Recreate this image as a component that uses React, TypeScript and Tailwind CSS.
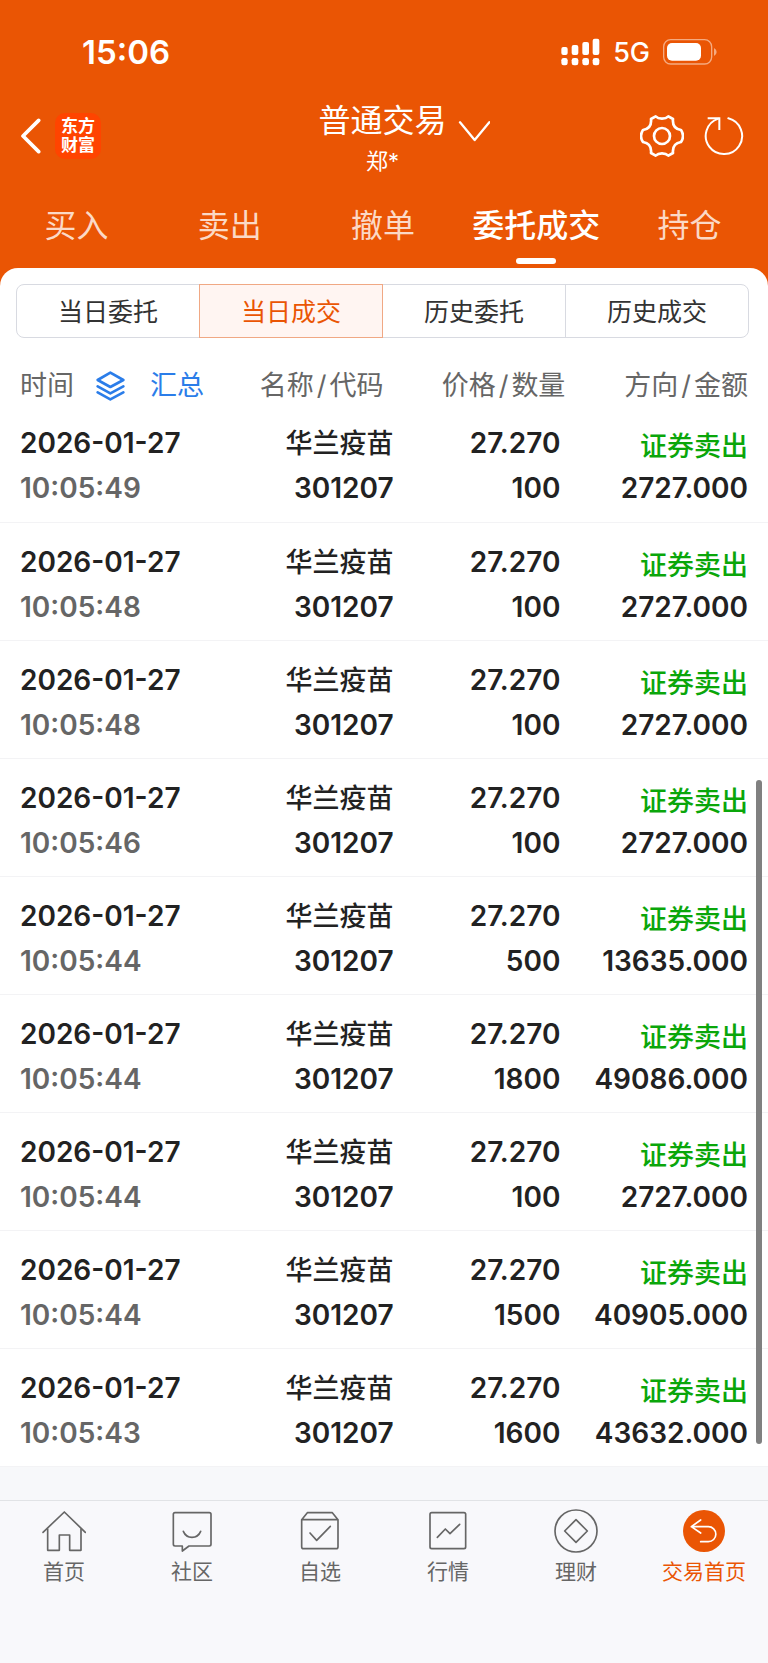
import { useState } from "react";
import type { ReactNode } from "react";

const TABS = ["买入", "卖出", "撤单", "委托成交", "持仓"];
const SEGMENTS = ["当日委托", "当日成交", "历史委托", "历史成交"];

type Trade = { time: string; quantity: string; amount: string };

const TRADES: Trade[] = [
  { time: "10:05:49", quantity: "100", amount: "2727.000" },
  { time: "10:05:48", quantity: "100", amount: "2727.000" },
  { time: "10:05:48", quantity: "100", amount: "2727.000" },
  { time: "10:05:46", quantity: "100", amount: "2727.000" },
  { time: "10:05:44", quantity: "500", amount: "13635.000" },
  { time: "10:05:44", quantity: "1800", amount: "49086.000" },
  { time: "10:05:44", quantity: "100", amount: "2727.000" },
  { time: "10:05:44", quantity: "1500", amount: "40905.000" },
  { time: "10:05:43", quantity: "1600", amount: "43632.000" },
];

function StatusBar() {
  return (
    <div className="flex h-[88px] items-center justify-between pt-[16px] pr-[51px] pl-[82px] text-white">
      <span className="text-[33px] leading-[40px] font-semibold">15:06</span>
      <div className="flex items-center gap-[13px]">
        <svg className="h-[28px] w-[39px]" viewBox="0 0 117 84" fill="currentColor" aria-hidden="true">
          <rect x="1" y="27" width="19" height="24" rx="6" />
          <rect x="32" y="21" width="20" height="30" rx="6" />
          <rect x="64" y="12" width="20" height="39" rx="6" />
          <rect x="95" y="2" width="20" height="49" rx="6" />
          <rect x="1" y="60" width="19" height="22" rx="7" />
          <rect x="32" y="60" width="20" height="22" rx="7" />
          <rect x="64" y="60" width="20" height="22" rx="7" />
          <rect x="95" y="60" width="20" height="22" rx="7" />
        </svg>
        <span className="pt-[2px] text-[27px] leading-[32px] font-medium">5G</span>
        <svg className="h-[26px] w-[54px]" viewBox="0 0 162 78" aria-hidden="true">
          <rect x="2" y="2" width="144" height="73" rx="21" fill="none" stroke="#f5aa80" strokeWidth="4" />
          <rect x="12" y="12" width="102" height="53" rx="15" fill="#fff" />
          <path d="M153 27 Q161 31 161 39 Q161 47 153 51 Z" fill="#f5aa80" />
        </svg>
      </div>
    </div>
  );
}

function NavBar() {
  return (
    <div className="flex h-[96px] items-start text-white">
      <div className="flex h-full flex-1 items-center gap-[12px] pl-[20px]">
        <button type="button" aria-label="返回">
          <svg className="h-[36px] w-[23px]" viewBox="0 0 69 108" fill="none" stroke="currentColor" strokeWidth="11" strokeLinecap="round" strokeLinejoin="round">
            <path d="M56 7 L9 54 L56 101" />
          </svg>
        </button>
        <div className="flex size-[46px] flex-col items-center justify-center rounded-[10px] bg-[#ff4400] text-[17px] leading-[19px] font-bold">
          <span>东方</span>
          <span>财富</span>
        </div>
      </div>
      <div className="flex flex-col items-center pt-[11px]">
        <h1>
          <button type="button" className="flex items-center">
            <span className="w-[43px]" />
            <span className="text-[32px] leading-[44px]">普通交易</span>
            <span className="flex w-[43px] justify-end pt-[22px]">
              <svg className="h-[22px] w-[32px]" viewBox="0 0 96 66" fill="none" stroke="currentColor" strokeWidth="7" strokeLinecap="round" strokeLinejoin="round" aria-hidden="true">
                <path d="M6 4 L50 57 L94 4" />
              </svg>
            </span>
          </button>
        </h1>
        <p className="text-[22px] leading-[36px]">郑*</p>
      </div>
      <div className="flex h-full flex-1 items-center justify-end gap-[19px] pr-[23px]">
        <button type="button" aria-label="设置">
          <svg className="size-[44px]" viewBox="-66 -66 132 132" fill="none" stroke="currentColor" strokeWidth="8" strokeLinejoin="round">
            <path d="M-19 -59 C-10 -50 10 -50 19 -59 L33 -51 C31 -32 40 -21 57 -18 Q63 -9 63 0 Q63 9 57 18 C40 21 31 32 33 51 L19 59 C10 50 -10 50 -19 59 L-33 51 C-31 32 -40 21 -57 18 Q-63 9 -63 0 Q-63 -9 -57 -18 C-40 -21 -31 -32 -33 -51 Z" />
            <circle r="24" />
          </svg>
        </button>
        <button type="button" aria-label="刷新">
          <svg className="size-[42px]" viewBox="0 0 126 126" fill="none" stroke="currentColor" strokeWidth="6" strokeLinecap="round">
            <path d="M76 10 A54.5 54.5 0 1 1 46 11" />
            <path d="M14 10 H49 V45" strokeLinecap="butt" />
          </svg>
        </button>
      </div>
    </div>
  );
}

function LayersIcon() {
  return (
    <svg className="h-[30px] w-[29px]" viewBox="0 0 87 90" fill="none" stroke="currentColor" strokeWidth="8" strokeLinecap="round" strokeLinejoin="round" aria-hidden="true">
      <path d="M43 5 L82 27 L43 48 L5 27 Z" />
      <path d="M5 46 L43 67 L82 46" />
      <path d="M5 64 L43 85 L82 64" />
    </svg>
  );
}

function PairHeading({ first, second }: { first: string; second: string }) {
  return (
    <>
      {first}
      <span className="mx-[3px]">/</span>
      {second}
    </>
  );
}

function TradeTable() {
  return (
    <table className="w-full table-fixed text-[#222]">
      <thead>
        <tr className="h-[65px] text-right align-top text-[27px] leading-[36px] text-[#666]">
          <th scope="col" className="w-[30.25%] pt-[30px] pl-[20px] text-left font-normal">
            <div className="flex items-center">
              <span>时间</span>
              <button type="button" className="ml-[22px] flex items-center gap-[25px] text-[#2b7de9]">
                <LayersIcon />
                <span>汇总</span>
              </button>
            </div>
          </th>
          <th scope="col" className="w-[21%] pt-[30px] pr-[10px] font-normal">
            <PairHeading first="名称" second="代码" />
          </th>
          <th scope="col" className="w-[22.5%] pt-[30px] pr-px font-normal">
            <PairHeading first="价格" second="数量" />
          </th>
          <th scope="col" className="pt-[30px] pr-[20px] font-normal">
            <PairHeading first="方向" second="金额" />
          </th>
        </tr>
      </thead>
      <tbody>
        {TRADES.map((trade, index) => (
          <tr key={index} className="h-[118px] border-b border-[#f3f3f5] text-right align-top text-[28px] leading-[45px] font-semibold">
            <td className="pt-[17px] pl-[20px] text-left">
              <div>2026-01-27</div>
              <div className="text-[#666]">{trade.time}</div>
            </td>
            <td className="pt-[17px]">
              <div className="text-[27px] font-medium">华兰疫苗</div>
              <div>301207</div>
            </td>
            <td className="pt-[17px] pr-[6px]">
              <div>27.270</div>
              <div>{trade.quantity}</div>
            </td>
            <td className="pt-[17px] pr-[20px]">
              <div className="h-[45px] pt-[3px] text-[27px] font-medium text-[#0aa60a]">证券卖出</div>
              <div>{trade.amount}</div>
            </td>
          </tr>
        ))}
      </tbody>
    </table>
  );
}

const NAV_ITEMS: { label: string; active?: boolean; drawing: ReactNode }[] = [
  {
    label: "首页",
    drawing: (
      <>
        <path d="M3 70 L67 9 L130 70" />
        <path d="M17 60 V124 H52 V78 H83 V124 H117 V60" />
      </>
    ),
  },
  {
    label: "社区",
    drawing: (
      <>
        <path d="M15 11 H118 Q123 11 123 16 V106 Q123 111 118 111 H57 L37 126 V111 H15 Q10 111 10 106 V16 Q10 11 15 11 Z" />
        <path d="M40 67 C50 91 82 91 92 67" />
      </>
    ),
  },
  {
    label: "自选",
    drawing: (
      <>
        <path d="M11 32 L28 11 H103 L120 32 V113 Q120 119 114 119 H17 Q11 119 11 113 Z M11 32 H120" />
        <path d="M36 72 L56 94 L97 52" />
      </>
    ),
  },
  {
    label: "行情",
    drawing: (
      <>
        <rect x="12" y="11" width="107" height="108" rx="5" />
        <path d="M34 85 L58 60 L72 74 L101 46" />
      </>
    ),
  },
  {
    label: "理财",
    drawing: (
      <>
        <circle cx="66" cy="66" r="63" />
        <path d="M66 32 L100 66 L66 100 L32 66 Z" />
      </>
    ),
  },
  {
    label: "交易首页",
    active: true,
    drawing: (
      <>
        <circle cx="66" cy="66" r="63" fill="#ea5504" stroke="none" />
        <path d="M56 33 L28 53 L56 72 M28 53 H79 A22 22 0 0 1 79 98 H56" stroke="#fff" />
      </>
    ),
  },
];

function BottomNav() {
  return (
    <nav className="flex flex-1 items-start border-t border-[#e1e3e6] bg-[#f8f8fb] pt-[8px] pb-[79px]">
      {NAV_ITEMS.map((item) => (
        <a
          key={item.label}
          href="#"
          className={`flex flex-1 flex-col items-center gap-[4px] text-[21px] leading-[30px] ${item.active ? "text-[#ea5504]" : "text-[#666]"}`}
        >
          <svg className="size-[44px]" viewBox="0 0 132 132" fill="none" stroke="currentColor" strokeWidth="5" strokeLinecap="round" strokeLinejoin="round" aria-hidden="true">
            {item.drawing}
          </svg>
          <span>{item.label}</span>
        </a>
      ))}
    </nav>
  );
}

export default function App() {
  const [tab, setTab] = useState(3);
  const [segment, setSegment] = useState(1);

  return (
    <div className="flex min-h-screen flex-col bg-[#f7f8fa] font-[Inter,'Noto_Sans_CJK_SC',sans-serif]">
      <header className="bg-[#ea5504]">
        <StatusBar />
        <NavBar />
        <div className="flex pr-[2px]">
          {TABS.map((label, index) => (
            <button
              key={label}
              type="button"
              onClick={() => setTab(index)}
              className={`relative h-[84px] flex-1 basis-0 text-[32px] leading-[44px] whitespace-nowrap ${index === tab ? "font-medium text-white" : "text-[#fbd9c6]"}`}
            >
              {label}
              {index === tab && (
                <span className="absolute bottom-[4px] left-1/2 h-[6px] w-[40px] -translate-x-1/2 rounded-full bg-white" />
              )}
            </button>
          ))}
        </div>
      </header>

      <main className="relative bg-[#ea5504]">
        <div className="rounded-t-[18px] bg-white pt-[16px]">
          <div className="mr-[19px] ml-[16px] flex h-[54px]">
            {SEGMENTS.map((label, index) => (
              <button
                key={label}
                type="button"
                onClick={() => setSegment(index)}
                className={`flex-1 border pt-[2px] text-[25px] leading-[36px] not-first:-ml-px first:rounded-l-[8px] last:rounded-r-[8px] ${index === segment ? "z-10 border-[#f0a884] bg-[#fff5f2] text-[#ea5504]" : "border-[#d8dae1] text-[#333]"}`}
              >
                {label}
              </button>
            ))}
          </div>
          <TradeTable />
        </div>
        <div className="absolute top-[512px] right-[6px] bottom-[23px] w-[6px] rounded-full bg-[#808080]" />
      </main>

      <div className="h-[33px]" />
      <BottomNav />
    </div>
  );
}
